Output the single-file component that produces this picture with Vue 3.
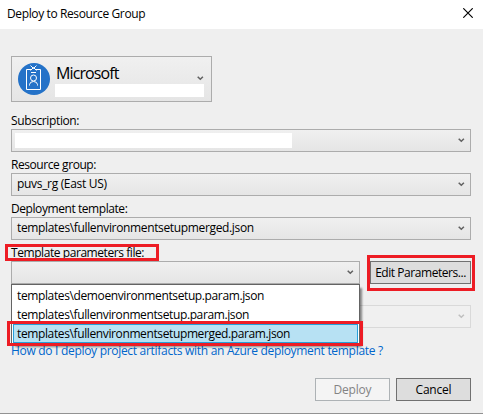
<script setup>
const files = [
  { name: 'templates\\demoenvironmentsetup.param.json', cls: 't-demo' },
  { name: 'templates\\fullenvironmentsetup.param.json', cls: 't-full' },
  { name: 'templates\\fullenvironmentsetupmerged.param.json', cls: 't-merged', selected: true },
]
</script>

<template>
  <div class="dialog">
    <header class="titlebar">
      <span class="title">Deploy to Resource Group</span>
      <svg class="close" width="10" height="10" viewBox="0 0 10 10"><path d="M0.3 0.3L9.7 9.7M9.7 0.3L0.3 9.7" stroke="#000" stroke-width="1.15" /></svg>
    </header>

    <main class="body">
      <div class="account">
        <svg class="badge" width="32" height="32" viewBox="0 0 32 32">
          <circle cx="16" cy="16" r="16" fill="#2472c8" />
          <g fill="none" stroke="#fff" stroke-width="1">
            <path d="M13.5 6.500H8.500V26.500H22.500V6.500H17.500" />
            <path d="M12.500 2.500L15.500 5.500L18.500 2.500M12.500 7.500L15.500 4.500L18.500 7.500" />
            <path d="M13 9.500H18" />
            <circle cx="15.500" cy="15" r="3" />
            <path d="M11.500 22.500V21.500Q12 18.500 15.500 18.500Q19 18.500 19.500 21.500V22.500" />
          </g>
        </svg>
        <div class="who">
          <span class="org">Microsoft</span>
          <div class="mask mask-account"></div>
        </div>
        <svg class="chev" width="7" height="5" viewBox="0 0 7 5"><path d="M0.700 0.700L3.300 3.300L5.900 0.700" /></svg>
      </div>

      <label class="label t-sub">Subscription:</label>
      <div class="combo sub">
        <div class="mask mask-sub"></div>
        <svg class="chev" width="7" height="5" viewBox="0 0 7 5"><path d="M0.700 0.700L3.300 3.300L5.900 0.700" /></svg>
      </div>

      <label class="label t-rg">Resource group:</label>
      <div class="combo">
        <span class="t-rgv">puvs_rg (East US)</span>
        <svg class="chev" width="7" height="5" viewBox="0 0 7 5"><path d="M0.700 0.700L3.300 3.300L5.900 0.700" /></svg>
      </div>

      <label class="label t-dt">Deployment template:</label>
      <div class="combo">
        <span class="t-dtv">templates\fullenvironmentsetupmerged.json</span>
        <svg class="chev" width="7" height="5" viewBox="0 0 7 5"><path d="M0.700 0.700L3.300 3.300L5.900 0.700" /></svg>
      </div>

      <label class="label marked"><span class="t-tp">Template parameters file:</span><i class="mark mark-label"></i></label>
      <div class="row">
        <div class="combo open">
          <svg class="chev" width="7" height="5" viewBox="0 0 7 5"><path d="M0.700 0.700L3.300 3.300L5.900 0.700" /></svg>
          <ul class="menu">
            <li v-for="f in files" :key="f.name" :class="{ selected: f.selected }">
              <span :class="f.cls">{{ f.name }}</span>
              <i v-if="f.selected" class="mark mark-item"></i>
            </li>
          </ul>
        </div>
        <div class="edit">
          <button class="btn wide"><span class="t-edit">Edit Parameters...</span></button>
          <i class="mark mark-edit"></i>
        </div>
      </div>

      <div class="combo disabled">
        <svg class="chev" width="7" height="5" viewBox="0 0 7 5"><path d="M0.700 0.700L3.300 3.300L5.900 0.700" /></svg>
      </div>

      <a class="link"><span class="t-link">How do I deploy project artifacts with an Azure deployment template ?</span></a>

      <footer class="actions">
        <button class="btn" disabled><span class="t-dep">Deploy</span></button>
        <button class="btn"><span class="t-can">Cancel</span></button>
      </footer>
    </main>
  </div>
</template>

<style>
body { margin: 0; overflow: hidden; }
</style>

<style scoped>
* { box-sizing: border-box; }
.dialog {
  width: 483px;
  height: 414px;
  display: flex;
  flex-direction: column;
  background: #efefef;
  border-bottom: 1px solid #929292;
  font-family: "Open Sans", "Noto Sans", sans-serif;
  font-size: 12px;
  line-height: 16px;
  color: #000;
  white-space: nowrap;
}
.titlebar {
  height: 29px;
  flex: none;
  background: #fff;
  display: flex;
  justify-content: space-between;
  padding: 6px 10px 0 7px;
}
.close { margin-top: 2px; }
.title { letter-spacing: -0.38px; }
.body { padding: 27px 12px 0 11px; display: flex; flex-direction: column; }
.account {
  width: 201px;
  height: 46px;
  border: 1px solid #acacac;
  background: linear-gradient(#f0f0f0, #e5e5e5);
  display: flex;
  padding: 6px 7px 0 6px;
  position: relative;
}
.badge { flex: none; }
.who { display: flex; flex-direction: column; margin-left: 5px; }
.org { font-size: 16px; line-height: 21px; height: 21px; padding-left: 1px; letter-spacing: -0.9px; }
.mask { background: #fff; flex: none; }
.mask-account { width: 149px; height: 13px; }
.chev { position: absolute; right: 5px; top: 8px; }
.chev path { fill: none; stroke: #606060; stroke-width: 1.5; }
.account .chev { right: 7px; top: 19px; }
.label { height: 21px; padding-top: 5px; position: relative; }
.label.t-sub { height: 27px; padding-top: 11px; }
.combo {
  height: 23px;
  border: 1px solid #acacac;
  background: linear-gradient(#f0f0f0, #e5e5e5);
  padding: 2px 0 0 5px;
  position: relative;
}
.combo.sub { padding: 3px; }
.mask-sub { width: 277px; height: 15px; }
.row { display: flex; justify-content: space-between; }
.combo.open { width: 349px; padding: 0; }
.menu {
  position: absolute;
  z-index: 2;
  left: -1px;
  top: 22px;
  width: 349px;
  margin: 0;
  padding: 1px;
  list-style: none;
  background: #fff;
  border: 1px solid #646464;
  box-shadow: 3px 3px 2px -1px rgba(0, 0, 0, 0.45);
}
.menu li { height: 19px; padding: 0 3px; border: 1px solid transparent; line-height: 17px; position: relative; }
.menu li.selected { background: #b7e1f3; border-color: #26a0da; }
.mark { position: absolute; border: 3px solid #ed1c24; pointer-events: none; }
.mark-label { left: -6px; top: 4px; width: 154px; height: 17px; z-index: 1; }
.mark-item { left: -7px; top: -4px; width: 356px; height: 25px; }
.edit { position: relative; }
.mark-edit { left: -3px; top: -6px; width: 108px; height: 36px; }
.btn {
  width: 75px;
  height: 23px;
  border: 1px solid #707070;
  background: #ddd;
  padding: 0;
  font: inherit;
  color: #000;
  display: block;
  text-align: center;
}
.btn.wide { width: 101px; }
.btn:disabled { background: #f4f4f4; border-color: #adb2b5; color: #838383; }
.disabled { margin-top: 21px; border-color: #d9d9d9; background: #f0f0f0; }
.disabled .chev path { stroke: #bfbfbf; }
.link { height: 50px; padding-top: 15px; color: #06c; }
.actions { display: flex; justify-content: flex-end; gap: 6px; }
.t-rgv { letter-spacing: -0.32px; }
.t-sub { letter-spacing: -0.38px; }
.t-rg, .t-dt, .t-tp { letter-spacing: -0.43px; }
.t-dtv { letter-spacing: -0.35px; }
.t-demo, .t-full, .t-merged { letter-spacing: -0.38px; }
.t-edit { letter-spacing: -0.45px; }
.t-link { letter-spacing: -0.3px; }
.t-dep, .t-can { letter-spacing: -0.2px; }
</style>
